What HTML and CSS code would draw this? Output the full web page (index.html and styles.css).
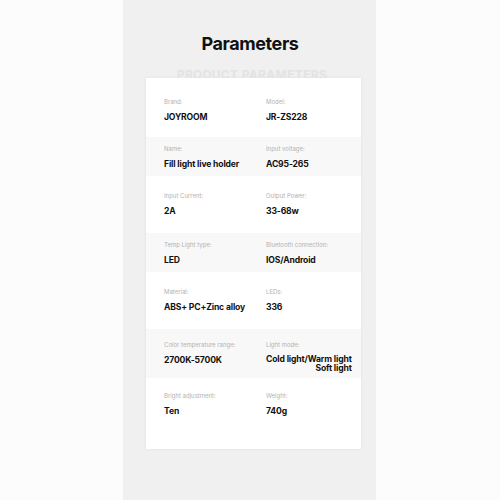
FILE: index.html
```html
<!DOCTYPE html>
<html>
<head>
<meta charset="utf-8">
<link rel="stylesheet" href="styles.css">
</head>
<body>
<div class="column">
  <h1 class="title">Parameters</h1>
  <div class="subtitle"><span>PRODUCT PARAMETERS</span></div>
  <div class="card">
    <div class="row r1">
      <div class="cell"><div class="label">Brand:</div><div class="value">JOYROOM</div></div>
      <div class="cell"><div class="label">Model:</div><div class="value">JR-ZS228</div></div>
    </div>
    <div class="row r2 alt">
      <div class="cell"><div class="label">Name:</div><div class="value">Fill light live holder</div></div>
      <div class="cell"><div class="label">Input voltage:</div><div class="value">AC95-265</div></div>
    </div>
    <div class="row r3">
      <div class="cell"><div class="label">Input Current:</div><div class="value">2A</div></div>
      <div class="cell"><div class="label">Output Power:</div><div class="value">33-68w</div></div>
    </div>
    <div class="row r4 alt">
      <div class="cell"><div class="label">Temp Light type:</div><div class="value">LED</div></div>
      <div class="cell"><div class="label">Bluetooth connection:</div><div class="value">IOS/Android</div></div>
    </div>
    <div class="row r5">
      <div class="cell"><div class="label">Material:</div><div class="value">ABS+ PC+Zinc alloy</div></div>
      <div class="cell"><div class="label">LEDs:</div><div class="value">336</div></div>
    </div>
    <div class="row r6 alt">
      <div class="cell"><div class="label">Color temperature range:</div><div class="value">2700K-5700K</div></div>
      <div class="cell"><div class="label">Light mode:</div><div class="value multi">Cold light/Warm light<br>Soft light</div></div>
    </div>
    <div class="row r7">
      <div class="cell"><div class="label">Bright adjustment:</div><div class="value">Ten</div></div>
      <div class="cell"><div class="label">Weight:</div><div class="value">740g</div></div>
    </div>
  </div>
</div>
</body>
</html>
```
FILE: styles.css
```css
* { box-sizing: border-box; }
html, body { margin: 0; padding: 0; }
body {
  background: #fcfcfc;
  font-family: Inter, "Liberation Sans", sans-serif;
  color: #111;
}
.column {
  width: 253px;
  height: 500px;
  margin-left: 123px;
  background: #f0f0f0;
  padding-top: 32px;
}
.title {
  margin: 0;
  font-size: 18px;
  line-height: 24px;
  font-weight: 700;
  letter-spacing: -0.4px;
  text-align: center;
  color: #111;
  padding-left: 1px;
}
.subtitle {
  margin-top: 12px;
  height: 10px;
  overflow: hidden;
  text-align: center;
  padding-left: 5px;
}
.subtitle span {
  display: block;
  font-size: 12px;
  line-height: 14px;
  font-weight: 700;
  letter-spacing: 0.35px;
  color: #e3e3e3;
}
.card {
  margin-left: 23px;
  width: 215px;
  background: #fff;
  box-shadow: 0 0 3px rgba(0,0,0,0.07);
}
.row {
  display: grid;
  grid-template-columns: 102px 1fr;
  padding-left: 18px;
  padding-right: 10px;
}
.alt { background: #f8f8f8; }
.r1 { height: 59px; padding-top: 20px; }
.r2 { height: 39px; padding-top: 8px; }
.r3 { height: 57px; padding-top: 16px; }
.r4 { height: 39px; padding-top: 8px; }
.r5 { height: 57px; padding-top: 16px; }
.r6 { height: 49px; padding-top: 12px; }
.r7 { height: 71px; padding-top: 14px; }
.label {
  font-size: 6px;
  line-height: 8px;
  color: #b2b2b2;
}
.value {
  margin-top: 4.5px;
  font-size: 8.6px;
  line-height: 12px;
  font-weight: 700;
  letter-spacing: -0.15px;
  color: #111;
  white-space: nowrap;
}
.value.multi {
  line-height: 9.5px;
  margin-top: 5.5px;
  text-align: right;
  display: inline-block;
}
```
